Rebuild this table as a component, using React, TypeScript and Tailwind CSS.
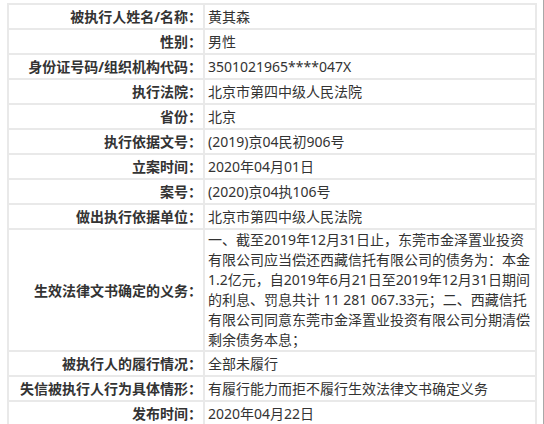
import React from 'react';

const rows: { label: string; value: React.ReactNode }[] = [
  { label: '被执行人姓名/名称：', value: '黄其森' },
  { label: '性别：', value: '男性' },
  { label: '身份证号码/组织机构代码：', value: '3501021965****047X' },
  { label: '执行法院：', value: '北京市第四中级人民法院' },
  { label: '省份：', value: '北京' },
  { label: '执行依据文号：', value: '(2019)京04民初906号' },
  { label: '立案时间：', value: '2020年04月01日' },
  { label: '案号：', value: '(2020)京04执106号' },
  { label: '做出执行依据单位：', value: '北京市第四中级人民法院' },
];

const duty = [
  '一、截至2019年12月31日止，东莞市金泽置业投资',
  '有限公司应当偿还西藏信托有限公司的债务为：本金',
  '1.2亿元，自2019年6月21日至2019年12月31日期间',
  '的利息、罚息共计 11 281 067.33元；二、西藏信托',
  '有限公司同意东莞市金泽置业投资有限公司分期清偿',
  '剩余债务本息；',
];

const tail = [
  { label: '被执行人的履行情况：', value: '全部未履行' },
  { label: '失信被执行人行为具体情形：', value: '有履行能力而拒不履行生效法律文书确定义务' },
  { label: '发布时间：', value: '2020年04月22日' },
];

const Row = ({ label, value }: { label: string; value: React.ReactNode }) => (
  <>
    <div className="bg-white h-[23px] flex items-center justify-end pr-[1px] font-bold whitespace-nowrap">{label}</div>
    <div className="bg-white h-[23px] flex items-center pl-[3px] whitespace-nowrap">{value}</div>
  </>
);

const App = () => {
  return (
    <div className="w-[544px] h-[424px] bg-white overflow-hidden relative font-['Noto_Sans','Noto_Sans_CJK_SC',sans-serif] text-[14px] text-[#333]">
      <div className="mt-[3px] ml-[7px] w-[530px] grid grid-cols-[194px_330px] gap-[2px] p-[2px] bg-[#e9e9e9]">
        {rows.map((r, i) => (
          <Row key={i} label={r.label} value={r.value} />
        ))}
        <div className="bg-white flex items-center justify-end pr-[1px] font-bold whitespace-nowrap">生效法律文书确定的义务：</div>
        <div className="bg-white pl-[3px] leading-[20px]">
          {duty.map((line, i) => (
            <div key={i} className="whitespace-nowrap">{line}</div>
          ))}
        </div>
        {tail.map((r, i) => (
          <Row key={i} label={r.label} value={r.value} />
        ))}
      </div>
      <div className="absolute top-0 right-0 w-[1px] h-full bg-[#a8a8a8]" />
    </div>
  );
};

export default App;
